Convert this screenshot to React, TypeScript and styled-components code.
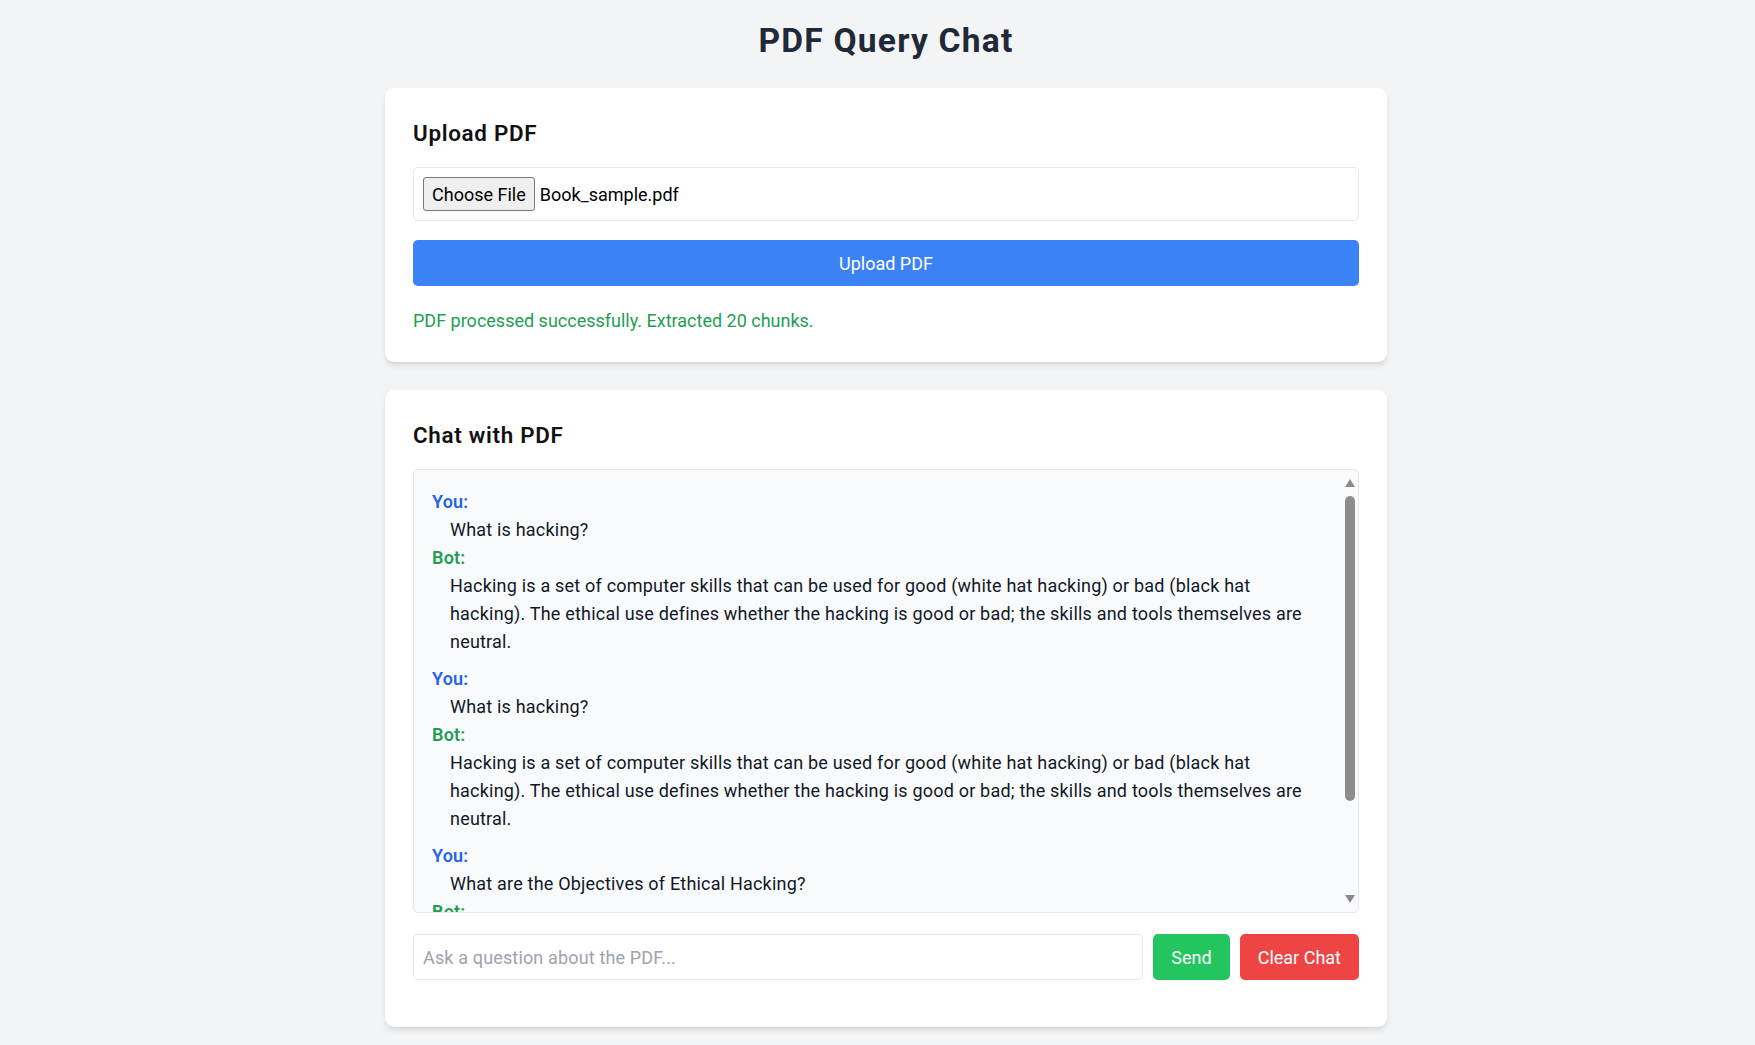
import React from "react";
import styled, { createGlobalStyle } from "styled-components";

const GlobalStyle = createGlobalStyle`
  html, body {
    margin: 0;
    padding: 0;
    background: #f3f4f6;
    font-family: Roboto, "Liberation Sans", sans-serif;
    color: #111827;
  }
  * { box-sizing: border-box; }
`;

const Page = styled.div`
  padding: 21px 0 18px 17px;
`;

const Container = styled.main`
  width: 1002px;
  margin: 0 auto;
`;

const Title = styled.h1`
  margin: 0 0 27px;
  text-align: center;
  font-size: 33.6px;
  line-height: 40px;
  font-weight: 700;
  letter-spacing: 1.2px;
  color: #1f2937;
`;

const Card = styled.section<{ $last?: boolean }>`
  background: #ffffff;
  border-radius: 9px;
  box-shadow: 0 4px 7px -1px rgba(0, 0, 0, 0.1), 0 2px 4px -2px rgba(0, 0, 0, 0.1);
  padding: 28px;
  margin-bottom: ${(p) => (p.$last ? "0" : "28px")};
`;

const CardTitle = styled.h2`
  margin: 0 0 16px;
  font-size: 22.4px;
  line-height: 35px;
  font-weight: 600;
  letter-spacing: 0.7px;
  color: #111111;
`;

const FileField = styled.div`
  display: flex;
  align-items: center;
  gap: 5px;
  height: 54px;
  padding: 0 9px;
  border: 1px solid #e5e7eb;
  border-radius: 5px;
  background: #fff;
  font-size: 18px;
`;

const ChooseButton = styled.button`
  height: 34px;
  padding: 0 8px;
  background: #efefef;
  border: 1px solid #767676;
  border-radius: 3px;
  font-family: inherit;
  font-size: 18px;
  color: #000;
`;

const FileName = styled.span`
  color: #000;
`;

const PrimaryButton = styled.button`
  display: block;
  width: 100%;
  height: 46px;
  margin-top: 19px;
  border: none;
  border-radius: 5px;
  background: #3b82f6;
  color: #ffffff;
  font-family: inherit;
  font-size: 18px;
`;

const Status = styled.p`
  margin: 21px 0 0;
  font-size: 18px;
  line-height: 27px;
  color: #1f9d55;
`;

const ChatFrame = styled.div`
  position: relative;
  height: 444px;
  margin-bottom: 21px;
  background: #f9fafb;
  border: 1px solid #e5e7eb;
  border-radius: 5px;
  overflow: hidden;
`;

const ChatScroller = styled.div`
  height: 100%;
  overflow-y: auto;
  padding: 18px 42px 18px 18px;
  scrollbar-width: none;
  &::-webkit-scrollbar {
    display: none;
  }
`;

const ScrollRail = styled.div`
  position: absolute;
  top: 0;
  right: 0;
  bottom: 0;
  width: 16px;
  display: flex;
  flex-direction: column;
  align-items: center;
`;

const RailArrow = styled.div`
  height: 26px;
  width: 100%;
  display: flex;
  align-items: center;
  justify-content: center;
`;

const RailThumb = styled.div`
  width: 10px;
  height: 305px;
  border-radius: 5px;
  background: #8d8d8d;
`;

const RailSpacer = styled.div`
  flex: 1;
`;

const Exchange = styled.div`
  margin-bottom: 9px;
`;

const Speaker = styled.div<{ $bot?: boolean }>`
  font-size: 18px;
  line-height: 28px;
  font-weight: 600;
  letter-spacing: 0.2px;
  color: ${(p) => (p.$bot ? "#1f9d55" : "#2563eb")};
`;

const MessageText = styled.p`
  margin: 0;
  padding-left: 18px;
  font-size: 18px;
  line-height: 28px;
  letter-spacing: 0.2px;
  color: #111827;
`;

const InputRow = styled.div`
  display: flex;
  gap: 10px;
  height: 46px;
  margin-bottom: 19px;
`;

const QuestionInput = styled.input`
  flex: 1;
  min-width: 0;
  padding: 0 9px;
  border: 1px solid #e5e7eb;
  border-radius: 5px;
  font-family: inherit;
  font-size: 18px;
  letter-spacing: 0.15px;
  color: #111827;
  outline: none;

  &::placeholder {
    color: #9ca3af;
  }
`;

const ActionButton = styled.button<{ $tone: "send" | "clear" }>`
  padding: 0 18px;
  border: none;
  border-radius: 5px;
  background: ${(p) => (p.$tone === "send" ? "#22c55e" : "#ef4444")};
  color: #ffffff;
  font-family: inherit;
  font-size: 18px;
`;

const hackingAnswer =
  "Hacking is a set of computer skills that can be used for good (white hat hacking) or bad (black hat hacking). The ethical use defines whether the hacking is good or bad; the skills and tools themselves are neutral.";

const messages = [
  { q: "What is hacking?", a: hackingAnswer },
  { q: "What is hacking?", a: hackingAnswer },
  {
    q: "What are the Objectives of Ethical Hacking?",
    a: "The objectives of ethical hacking are to find vulnerabilities before malicious attackers do, to test how well security controls hold up, and to help organizations strengthen their systems.",
  },
];

const ArrowUp = () => (
  <svg width="10" height="8" viewBox="0 0 10 8">
    <path d="M5 0L10 8H0z" fill="#8a8a8a" />
  </svg>
);

const ArrowDown = () => (
  <svg width="10" height="8" viewBox="0 0 10 8">
    <path d="M0 0H10L5 8z" fill="#8a8a8a" />
  </svg>
);

export default function App() {
  return (
    <>
      <GlobalStyle />
      <Page>
        <Container>
          <Title>PDF Query Chat</Title>

          <Card>
            <CardTitle>Upload PDF</CardTitle>
            <FileField>
              <ChooseButton type="button">Choose File</ChooseButton>
              <FileName>Book_sample.pdf</FileName>
            </FileField>
            <PrimaryButton type="button">Upload PDF</PrimaryButton>
            <Status>PDF processed successfully. Extracted 20 chunks.</Status>
          </Card>

          <Card $last>
            <CardTitle>Chat with PDF</CardTitle>
            <ChatFrame>
              <ChatScroller>
                {messages.map((m, i) => (
                  <Exchange key={i}>
                    <Speaker>You:</Speaker>
                    <MessageText>{m.q}</MessageText>
                    <Speaker $bot>Bot:</Speaker>
                    <MessageText>{m.a}</MessageText>
                  </Exchange>
                ))}
              </ChatScroller>
              <ScrollRail aria-hidden>
                <RailArrow>
                  <ArrowUp />
                </RailArrow>
                <RailThumb />
                <RailSpacer />
                <RailArrow>
                  <ArrowDown />
                </RailArrow>
              </ScrollRail>
            </ChatFrame>
            <InputRow>
              <QuestionInput placeholder="Ask a question about the PDF..." />
              <ActionButton type="button" $tone="send">
                Send
              </ActionButton>
              <ActionButton type="button" $tone="clear">
                Clear Chat
              </ActionButton>
            </InputRow>
          </Card>
        </Container>
      </Page>
    </>
  );
}
